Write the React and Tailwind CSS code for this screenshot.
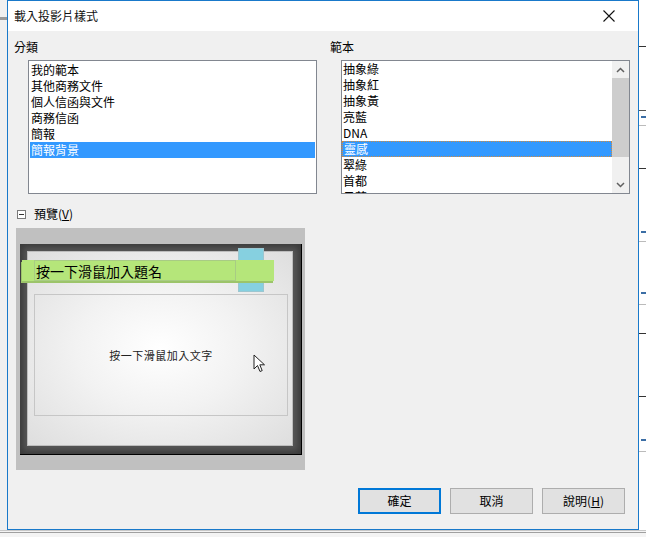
import React from 'react';

const font = { fontFamily: '"Microsoft JhengHei", "Noto Sans CJK TC", "Noto Sans", sans-serif' };

const categories = ['我的範本', '其他商務文件', '個人信函與文件', '商務信函', '簡報', '簡報背景'];
const templates = ['抽象綠', '抽象紅', '抽象黃', '亮藍', 'DNA', '靈感', '翠綠', '首都', '日落'];

const Cursor = () => (
  <svg width="13" height="20" viewBox="0 0 13 20" className="absolute left-[225px] top-[102px]">
    <path d="M1 1 L1 15 L4.5 11.5 L7 17.5 L9.2 16.6 L6.8 10.8 L11.5 10.8 Z" fill="#fff" stroke="#222" strokeWidth="1" strokeLinejoin="round" />
  </svg>
);

const Slide = () => (
  <div className="relative w-[266px] h-[195px] border border-[#bdbdbd] bg-[radial-gradient(ellipse_at_center,#ffffff_0%,#f2f2f2_45%,#dedede_100%)]">
    {/* blue accent behind the title bar */}
    <div className="absolute left-[210px] top-[-4px] w-[26px] h-[44px] bg-[#86d0e0] border border-[#9cc6d0]" />
    <div className="absolute left-[-6px] top-[8px] w-[252px] h-[21px] bg-[#b5e67a] shadow-[-1px_2px_0_#9cc46a]">
      <div className="ml-[12px] w-[202px] h-full border border-[#a8cc84] flex items-center">
        <span className="pl-[1px] text-[14px] leading-none text-black">按一下滑鼠加入題名</span>
      </div>
    </div>
    <div className="absolute left-[6px] top-[42px] w-[254px] h-[122px] border border-[#c6c6c6] flex items-center justify-center">
      <span className="text-[11px] text-[#222] tracking-[0.5px]">按一下滑鼠加入文字</span>
    </div>
    <Cursor />
  </div>
);

export default function App() {
  return (
    <div className="relative w-[646px] h-[537px] overflow-hidden bg-[#f0f0f0] text-[12px] text-black" style={font}>
      {/* background app remnants */}
      <div className="absolute left-0 top-[17px] w-[7px] h-[3px] bg-[#9a9a9a]" />
      <div className="absolute right-0 top-0 w-[7px] h-[537px] bg-white flex flex-col">
        <div className="h-[46px]" />
        <div className="h-px bg-[#333]" />
        <div className="h-[63px]" />
        <div className="h-px bg-[#555]" />
        <div className="mt-[5px] h-[2px] w-[5px] ml-[2px] bg-[#3b6ea5]" />
        <div className="mt-[7px] h-px bg-[#bbb]" />
        <div className="h-[42px]" />
        <div className="h-px bg-[#333]" />
        <div className="h-[62px]" />
        <div className="h-[2px] w-[5px] ml-[2px] bg-[#3b6ea5]" />
        <div className="mt-[8px] h-px bg-[#bbb]" />
        <div className="h-[50px]" />
        <div className="h-[2px] w-[5px] ml-[2px] bg-[#3b6ea5]" />
        <div className="mt-[10px] h-px bg-[#bbb]" />
        <div className="h-[28px]" />
        <div className="h-px bg-[#333]" />
        <div className="h-[62px]" />
        <div className="h-px bg-[#333]" />
        <div className="h-[42px]" />
        <div className="h-[2px] w-[5px] ml-[2px] bg-[#3b6ea5]" />
        <div className="mt-[10px] h-px bg-[#bbb]" />
      </div>
      <div className="absolute left-0 top-[530px] w-[646px] h-[7px] bg-[#f4f4f4] flex flex-col">
        <div className="h-px bg-[#c8c8c8]" />
        <div className="mt-px h-px bg-[#a0a0a0]" />
      </div>

      {/* dialog window */}
      <div className="absolute left-[7px] top-0 w-[632px] h-[530px] border border-[#1979ca] bg-[#f0f0f0] flex flex-col">
        <div className="h-[30px] bg-white flex items-center justify-between pl-[6px] pr-[23px]">
          <span className="text-[12px] text-[#111]">載入投影片樣式</span>
          <svg width="12" height="12" viewBox="0 0 12 12">
            <path d="M0.5 0.5 L11.5 11.5 M11.5 0.5 L0.5 11.5" stroke="#111" strokeWidth="1.1" />
          </svg>
        </div>

        <div className="flex pt-[8px]">
          {/* 分類 */}
          <div className="ml-[6px] w-[303px] flex flex-col">
            <div className="h-[16px] leading-[16px]">分類</div>
            <div className="mt-[5px] ml-[14px] w-[289px] h-[134px] border border-[#828790] bg-white py-px px-px">
              {categories.map((c, i) => (
                <div
                  key={c}
                  className={`h-[16px] leading-[16px] pl-[1px] ${i === 5 ? 'bg-[#3399ff] text-white' : ''}`}
                >
                  {c}
                </div>
              ))}
            </div>
          </div>

          {/* 範本 */}
          <div className="ml-[13px] w-[300px] flex flex-col">
            <div className="h-[16px] leading-[16px]">範本</div>
            <div className="mt-[5px] ml-[11px] w-[289px] h-[134px] border border-[#828790] bg-white flex">
              <div className="flex-1 overflow-hidden">
                {templates.map((t, i) => (
                  <div
                    key={t}
                    className={`h-[16px] pl-[1px] ${i === 5 ? 'bg-[#3399ff] text-white border border-dotted border-[#d08a40] leading-[14px]' : 'leading-[16px]'}`}
                  >
                    {t}
                  </div>
                ))}
              </div>
              <div className="w-[17px] bg-[#f0f0f0] flex flex-col">
                <div className="h-[17px] flex items-center justify-center">
                  <svg width="9" height="6" viewBox="0 0 9 6">
                    <path d="M1 5 L4.5 1.5 L8 5" fill="none" stroke="#606060" strokeWidth="1.5" />
                  </svg>
                </div>
                <div className="h-[79px] bg-[#cdcdcd]" />
                <div className="flex-1" />
                <div className="h-[17px] flex items-center justify-center">
                  <svg width="9" height="6" viewBox="0 0 9 6">
                    <path d="M1 1 L4.5 4.5 L8 1" fill="none" stroke="#606060" strokeWidth="1.5" />
                  </svg>
                </div>
              </div>
            </div>
          </div>
        </div>

        {/* 預覽 */}
        <div className="mt-[12px] ml-[9px] flex items-center h-[16px]">
          <div className="w-[9px] h-[9px] border border-[#7a7a7a] bg-white flex items-center justify-center">
            <div className="w-[5px] h-px bg-[#333]" />
          </div>
          <span className="ml-[8px] leading-[16px]">
            預覽(<span className="underline">V</span>)
          </span>
        </div>
        <div className="mt-[6px] ml-[8px] w-[289px] h-[242px] bg-[#c0c0c0] pt-[16px] pl-[4px]">
          <div className="w-[282px] h-[211px] bg-[#565656] border-r border-b border-black shadow-[inset_0_0_6px_3px_#3a3a3a] pt-[7px] pl-[7px]">
            <Slide />
          </div>
        </div>

        {/* buttons */}
        <div className="mt-[18px] flex justify-end gap-[9px] pr-[13px]">
          <button className="w-[83px] h-[26px] border-2 border-[#0078d7] bg-[#e1e1e1] text-[12px]">確定</button>
          <button className="w-[83px] h-[26px] border border-[#adadad] bg-[#e1e1e1] text-[12px]">取消</button>
          <button className="w-[83px] h-[26px] border border-[#adadad] bg-[#e1e1e1] text-[12px]">
            說明(<span className="underline">H</span>)
          </button>
        </div>
      </div>
    </div>
  );
}
